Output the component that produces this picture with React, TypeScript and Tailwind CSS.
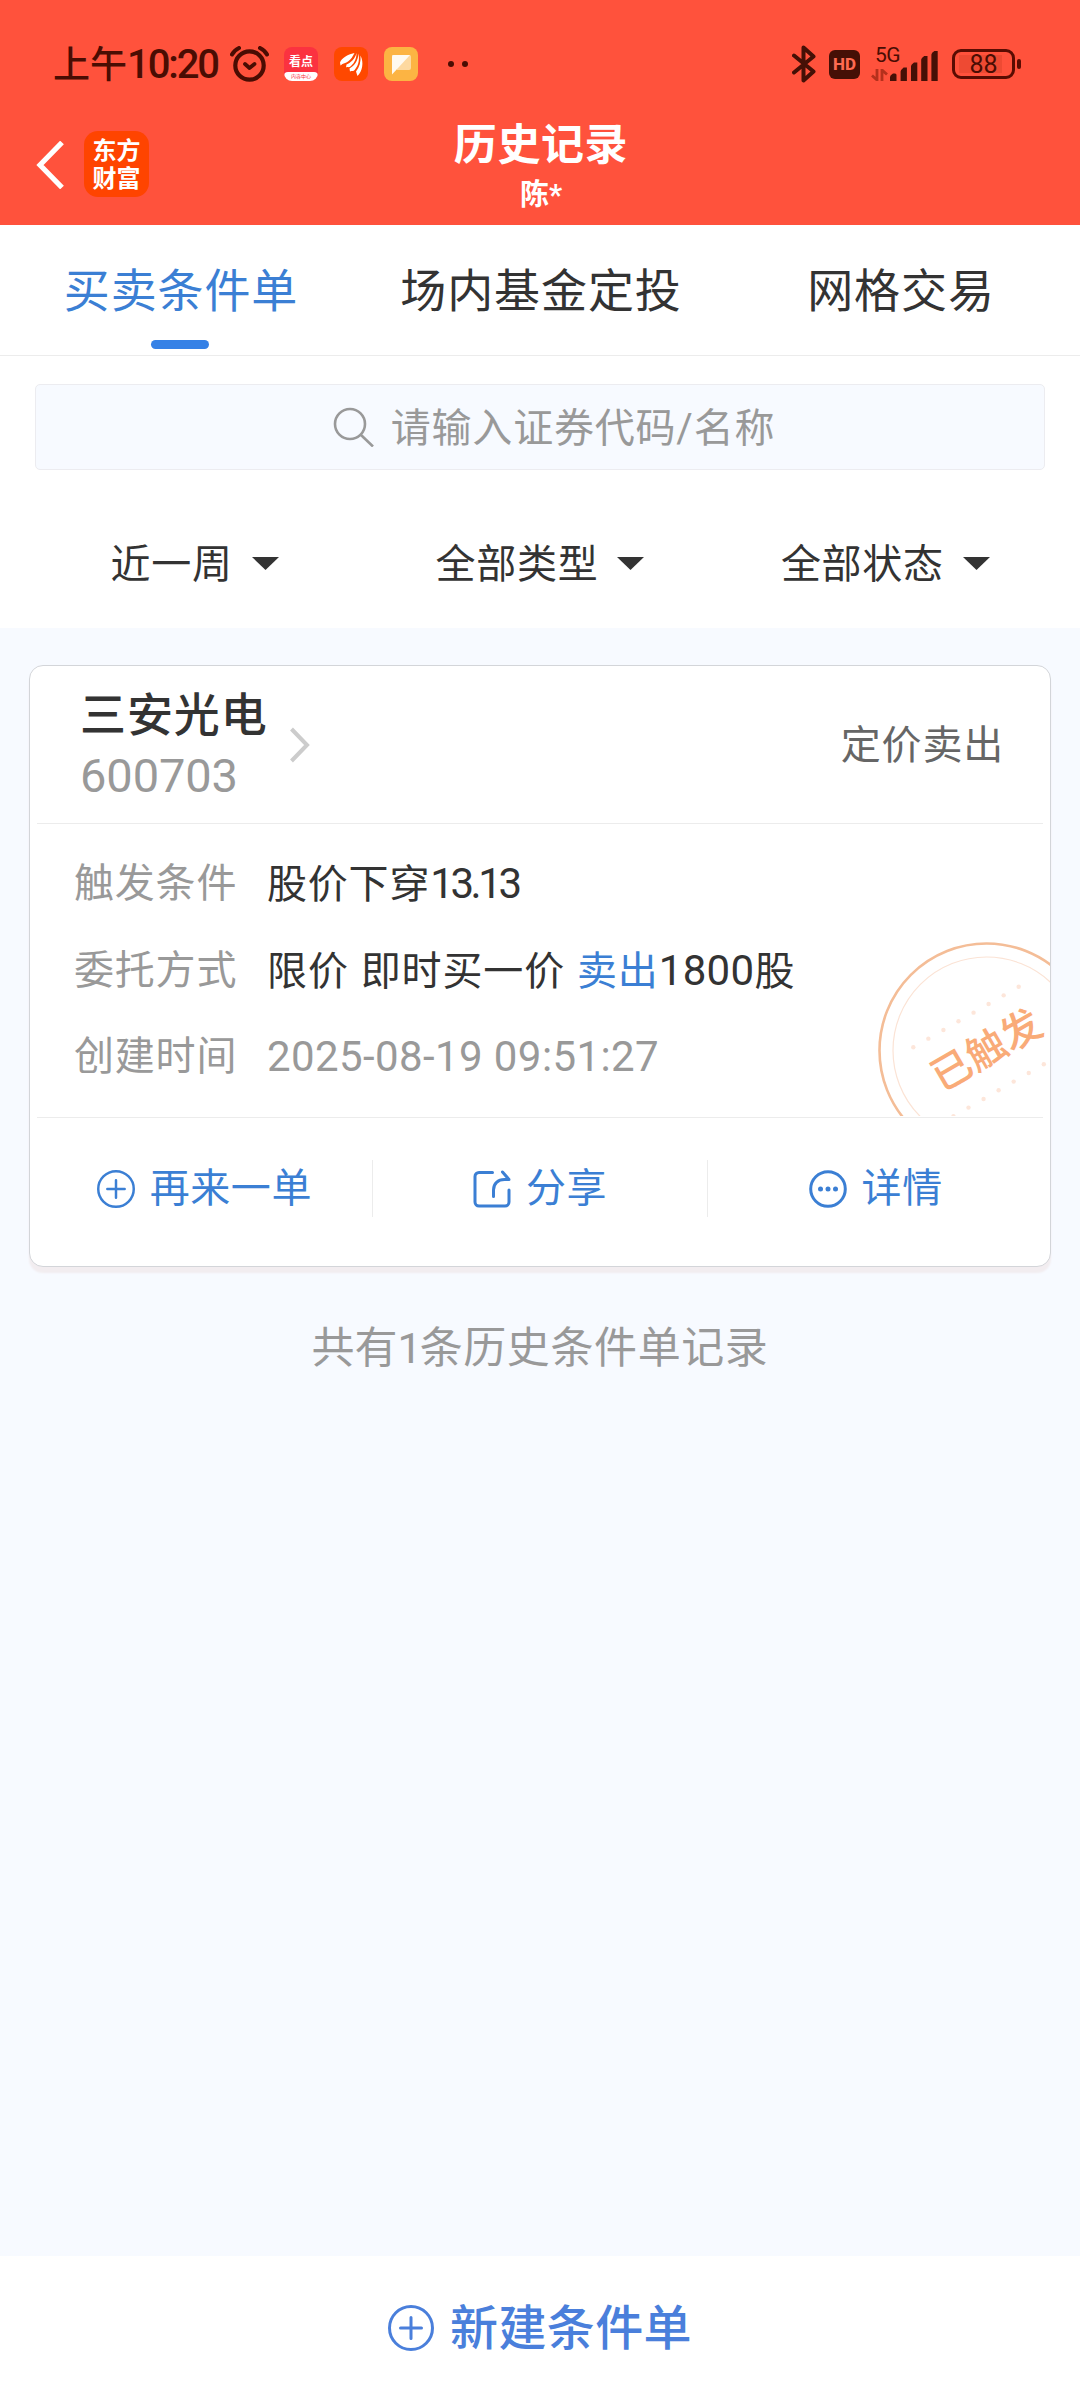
import type { ReactNode } from 'react';

const tabs = [
  { label: '买卖条件单', active: true },
  { label: '场内基金定投', active: false },
  { label: '网格交易', active: false },
];

const filters = ['近一周', '全部类型', '全部状态'];

const stampDots = [0, 1, 2, 3, 4, 5, 6, 7];

function StatusBar() {
  return (
    <div className="flex h-[128px] items-center justify-between pl-[53px] pr-[59px] text-[#4a0d03]">
      <div className="flex items-center">
        <span className="w-[177px] whitespace-nowrap pt-0.5 text-[37px] font-medium leading-none">
          上午<span className="text-[40px] tracking-[-2.1px]">10:20</span>
        </span>
        <svg className="h-9 w-[39px]" viewBox="0 0 39 36" fill="none" stroke="currentColor" strokeLinecap="round">
          <circle cx="19.5" cy="19.5" r="14.2" strokeWidth="4.2" />
          <path d="M15 18l4.5 4 5-4" strokeWidth="3.8" strokeLinejoin="round" />
          <path d="M2 8.500Q4 4.500 9 2M37 8.500Q35 4.500 30 2" strokeWidth="4" />
        </svg>
        <div className="ml-[15px] flex h-[34px] w-[34px] flex-col overflow-hidden rounded-[8px] bg-[#fb3240]">
          <span className="flex h-[25px] items-center justify-center pt-1 text-[12px] font-bold leading-none text-white">看点</span>
          <span className="flex h-[9px] items-center justify-center rounded-t-[4px] bg-white text-[5px] leading-none text-[#fb3240]">
            内容中心
          </span>
        </div>
        <svg className="ml-4 h-[34px] w-[34px]" viewBox="0 0 34 34">
          <rect width="34" height="34" rx="8" fill="#ff4800" />
          <path d="M20.500 6C13 7.500 8 11 6 15.500L6.500 18.500C9 16 12 16 14 14.500C17 12.500 19 9 20.500 6Z" fill="#fff" />
          <path d="M22.500 6C21 12 17 15.500 12.500 17.500L12 20.500C14 19.500 15 21 17 19C21 15.500 22.500 10.500 22.500 6Z" fill="#fff" />
          <path d="M24.500 6.500C24 14 20.500 18.500 15.500 21.500L16 24.500C18 23.500 19 25 21 22.500C25 17.500 25.500 12 24.500 6.500Z" fill="#fff" />
          <path d="M26.500 8.500C27 15 25.500 20 22 24.500L23.500 29C28.500 24 30 15.500 26.500 8.500Z" fill="#fff" />
        </svg>
        <svg className="ml-4 h-[34px] w-[34px]" viewBox="0 0 34 34">
          <rect width="34" height="34" rx="8" fill="#fcb443" />
          <path d="M8 8h17.500a1.500 1.500 0 0 1 1.500 1.500V21a2 2 0 0 1-2 2H13z" fill="#fdd9a0" />
          <path d="M9.500 8H26L8 27.500V9.500A1.500 1.500 0 0 1 9.500 8Z" fill="#fffaf0" />
        </svg>
        <div className="ml-[30px] flex gap-2">
          <span className="h-1.5 w-1.5 rounded-full bg-current" />
          <span className="h-1.5 w-1.5 rounded-full bg-current" />
        </div>
      </div>

      <div className="flex items-center">
        <svg className="h-[38px] w-6" viewBox="0 0 24 38" fill="none" stroke="#451006" strokeWidth="4" strokeLinejoin="round" strokeLinecap="round">
          <path d="M2 10.500L21.500 26.500L11.500 35.500V2.500L21.500 11.500L2 27.500" />
        </svg>
        <span className="ml-[13px] flex h-[29px] w-[31px] items-center justify-center rounded-[6px] bg-[#451006] text-[17px] font-extrabold leading-none text-[#ff6a50]">
          HD
        </span>
        <div className="ml-[11px] flex h-[34px] w-[68px] items-end">
          <div className="flex h-full w-[19px] flex-col justify-between">
            <span className="pl-1 text-[21px] leading-[17px] tracking-[-0.5px]">5G</span>
            <svg className="h-3 w-[17px]" viewBox="0 0 17 12" fill="none" stroke="#b5301c" strokeWidth="2.800">
              <path d="M6 0v11L1 6.500M11 12V1l5 4.500" />
            </svg>
          </div>
          <svg className="h-[30px] w-12" viewBox="0 0 48 30" fill="#451006">
            <path d="M0 30v-4q0-2 3-3.500h2q1.500 0 1.500 1.500v6zM10.600 30V20.500q0-1.500 3-4h3.300V30zM21 30V15q0-1.500 3-3.500h3.300V30zM31.200 30V8.500q0-1.500 3-3.500h3.300V30zM41.400 30V3.500q0-2 3-3.500h3.300v30z" />
          </svg>
        </div>
        <div className="ml-[13px] flex items-center">
          <div className="flex h-[30px] w-[63px] items-center rounded-[9px] border-[3px] border-[#5a0c02] pl-1">
            <span className="flex h-[18px] w-[43px] items-center justify-center bg-[#ee4a33] pl-1.5 text-[25px] leading-none">88</span>
          </div>
          <span className="ml-[2px] h-2.5 w-1 rounded-[2px] bg-[#5a0c02]" />
        </div>
      </div>
    </div>
  );
}

function Header() {
  return (
    <header className="relative h-[225px] bg-[#ff523c]">
      <StatusBar />
      <div className="absolute left-[36px] top-[131px] flex items-center">
        <svg className="mt-0.5 h-12 w-7" viewBox="0 0 28 48" fill="none" stroke="#fff" strokeWidth="5.200">
          <path d="M26 1.500L4 24l22 22.500" />
        </svg>
        <div className="ml-[20px] flex h-[66px] w-[65px] flex-col items-center justify-center gap-1 rounded-[14px] bg-[#ff4400] pt-0.5 text-[24px] font-bold leading-[24px] text-white">
          <span>东方</span>
          <span>财富</span>
        </div>
      </div>
      <div className="-mt-[6px] flex flex-col items-center text-white">
        <h1 className="pl-0.5 text-[43px] font-bold leading-[46px] tracking-[0.6px]">历史记录</h1>
        <p className="mt-[4px] pl-0.5 text-[29px] font-bold leading-[46px]">陈*</p>
      </div>
    </header>
  );
}

function CirclePlus({ className }: { className: string }) {
  return (
    <svg className={className} viewBox="0 0 46 46" fill="none" stroke="currentColor" strokeWidth="3" strokeLinecap="round">
      <circle cx="23" cy="23" r="21.500" />
      <path d="M12.500 23h21M23 12.500v21" />
    </svg>
  );
}

function ShareIcon() {
  return (
    <svg className="h-[38px] w-[38px]" viewBox="0 0 38 38" fill="none" stroke="currentColor" strokeWidth="3" strokeLinecap="round">
      <path d="M19.500 2.500H6a4 4 0 0 0-4 4V32a4 4 0 0 0 4 4h26a4 4 0 0 0 4-4V20" />
      <path d="M20.500 26.500V20c0-6.500 4.500-10.500 11-10.500H36L29.500 2" strokeLinejoin="round" />
    </svg>
  );
}

function DetailIcon() {
  return (
    <svg className="h-[38px] w-[38px]" viewBox="0 0 38 38">
      <circle cx="19" cy="19" r="17.300" fill="none" stroke="currentColor" strokeWidth="3" />
      <circle cx="11.500" cy="19" r="2.500" fill="currentColor" />
      <circle cx="19" cy="19" r="2.500" fill="currentColor" />
      <circle cx="26.500" cy="19" r="2.500" fill="currentColor" />
    </svg>
  );
}

function Stamp() {
  return (
    <div className="absolute bottom-[1px] right-0 h-[174px] w-[172px] overflow-hidden">
      <svg className="h-full w-full" viewBox="878 941 172 174">
        <circle cx="986.500" cy="1049.500" r="107" fill="none" stroke="#f4bd97" strokeWidth="2.600" />
        <circle cx="986.500" cy="1049.500" r="93.500" fill="none" stroke="#fbe3d5" strokeWidth="1.200" />
        {stampDots.map((i) => (
          <g key={i} fill="#fde6da">
            <circle cx={913.3 + i * 15.06} cy={1046.3 - i * 8.66} r="2.200" />
            <circle cx={1043.8 - i * 15.06} cy={1063.3 + i * 8.66} r="2.200" />
          </g>
        ))}
      </svg>
      <span className="absolute left-[49px] top-[90px] -rotate-30 whitespace-nowrap text-[40px] font-medium leading-[38px] text-[#f9ab78]">
        已触发
      </span>
    </div>
  );
}

function Row({ label, children }: { label: string; children: ReactNode }) {
  return (
    <div className="flex h-[86.5px] items-center whitespace-nowrap text-[40px] leading-none">
      <span className="w-[193px] tracking-[0.8px] text-[#999]">{label}</span>
      {children}
    </div>
  );
}

function Action({ icon, label }: { icon: ReactNode; label: string }) {
  return (
    <div className="flex h-[57px] flex-1 items-center justify-center gap-[15px] text-[40px] leading-none tracking-[0.6px] text-[#3b7fd4]">
      {icon}
      <span className="pt-px">{label}</span>
    </div>
  );
}

function OrderCard() {
  return (
    <section className="mx-[29px] mt-[37px] h-[602px] rounded-[14px] border border-[#d3d5d9] bg-white px-[7px] shadow-[0_6px_2px_#f2edf0]">
      <div className="flex h-[158px] items-center border-b border-[#ececec] pl-[43px] pr-[39px]">
        <div className="flex flex-col pt-0.5">
          <h2 className="text-[46px] font-medium leading-[56px] tracking-[0.9px] text-[#333]">三安光电</h2>
          <span className="mt-[5px] text-[47px] leading-[56px] tracking-[-0.1px] text-[#999]">600703</span>
        </div>
        <svg className="ml-[22px] h-9 w-5" viewBox="0 0 20 36" fill="none" stroke="#ccc" strokeWidth="4">
          <path d="M1.500 2L17 18L1.500 34" />
        </svg>
        <span className="ml-auto pt-0.5 text-[40px] leading-none tracking-[0.8px] text-[#666]">定价卖出</span>
      </div>

      <div className="relative -mr-[7px] h-[293px] pl-[37px] pt-[17px]">
        <Row label="触发条件">
          <span className="tracking-[0.8px] text-[#333]">
            股价下穿<span className="text-[42px] tracking-[-3.4px]">13.13</span>
          </span>
        </Row>
        <Row label="委托方式">
          <span className="tracking-[0.9px] text-[#333]">
            限价 <span className="ml-px">即时买一价</span> <span className="ml-px text-[#3b7fd4]">卖出</span>
            <span className="text-[42px] tracking-[0.3px]">1800</span>股
          </span>
        </Row>
        <Row label="创建时间">
          <span className="text-[42px] tracking-[0.4px] text-[#999]">2025-08-19 09:51:27</span>
        </Row>
        <Stamp />
      </div>

      <div className="flex items-start divide-x divide-[#ececec] border-t border-[#ececec] pt-[42px]">
        <Action icon={<CirclePlus className="h-[38px] w-[38px]" />} label="再来一单" />
        <Action icon={<ShareIcon />} label="分享" />
        <Action icon={<DetailIcon />} label="详情" />
      </div>
    </section>
  );
}

export default function App() {
  return (
    <div className="flex h-[2400px] w-[1080px] flex-col bg-[#f7faff] font-['Roboto','Noto_Sans_CJK_SC',sans-serif]">
      <Header />

      <div className="h-[403px] bg-white">
        <nav className="flex h-[131px] border-b border-[#ececec]">
          {tabs.map((tab) => (
            <div key={tab.label} className="flex flex-1 flex-col items-center pt-[37px]">
              <span
                className={
                  tab.active
                    ? 'pl-0.5 text-[46px] leading-[58px] tracking-[0.9px] text-[#3b7fd4]'
                    : 'pl-0.5 text-[46px] leading-[58px] tracking-[0.9px] text-[#333]'
                }
              >
                {tab.label}
              </span>
              {tab.active && <span className="mt-[20px] h-[9px] w-[58px] rounded-full bg-[#3581e6]" />}
            </div>
          ))}
        </nav>

        <div className="mx-[35px] mt-7 flex h-[86px] items-center justify-center rounded-[5px] border border-[#ececf0] bg-[#f7faff] pl-[28px] text-[#999]">
          <svg className="h-10 w-[41px]" viewBox="0 0 41 40" fill="none" stroke="currentColor" strokeWidth="2.600">
            <circle cx="17" cy="17" r="15" />
            <path d="M27.500 27.500L40 39.500" />
          </svg>
          <span className="ml-[17px] pt-[3px] text-[40px] leading-none tracking-[0.8px]">请输入证券代码/名称</span>
        </div>

        <div className="mx-[22px] mt-[50px] flex h-[86px] items-center">
          {filters.map((label) => (
            <div key={label} className="flex flex-1 items-center justify-center gap-[19px] text-[#333]">
              <span className="pt-[3px] text-[40px] leading-none tracking-[0.7px]">{label}</span>
              <svg className="h-[13px] w-[27px]" viewBox="0 0 27 13" fill="currentColor">
                <path d="M0 0h27L13.500 13z" />
              </svg>
            </div>
          ))}
        </div>
      </div>

      <OrderCard />
      <p className="mt-[52px] text-center text-[43px] leading-[58px] text-[#999]">
        共有<span className="tracking-[-2px]">1</span>
        <span className="tracking-[0.6px]">条历史条件单记录</span>
      </p>

      <footer className="mt-auto flex h-[144px] items-center justify-center gap-4 bg-white text-[#4a7fdb]">
        <CirclePlus className="h-[46px] w-[46px]" />
        <span className="pt-0.5 text-[48px] font-medium leading-none tracking-[0.4px]">新建条件单</span>
      </footer>
    </div>
  );
}
